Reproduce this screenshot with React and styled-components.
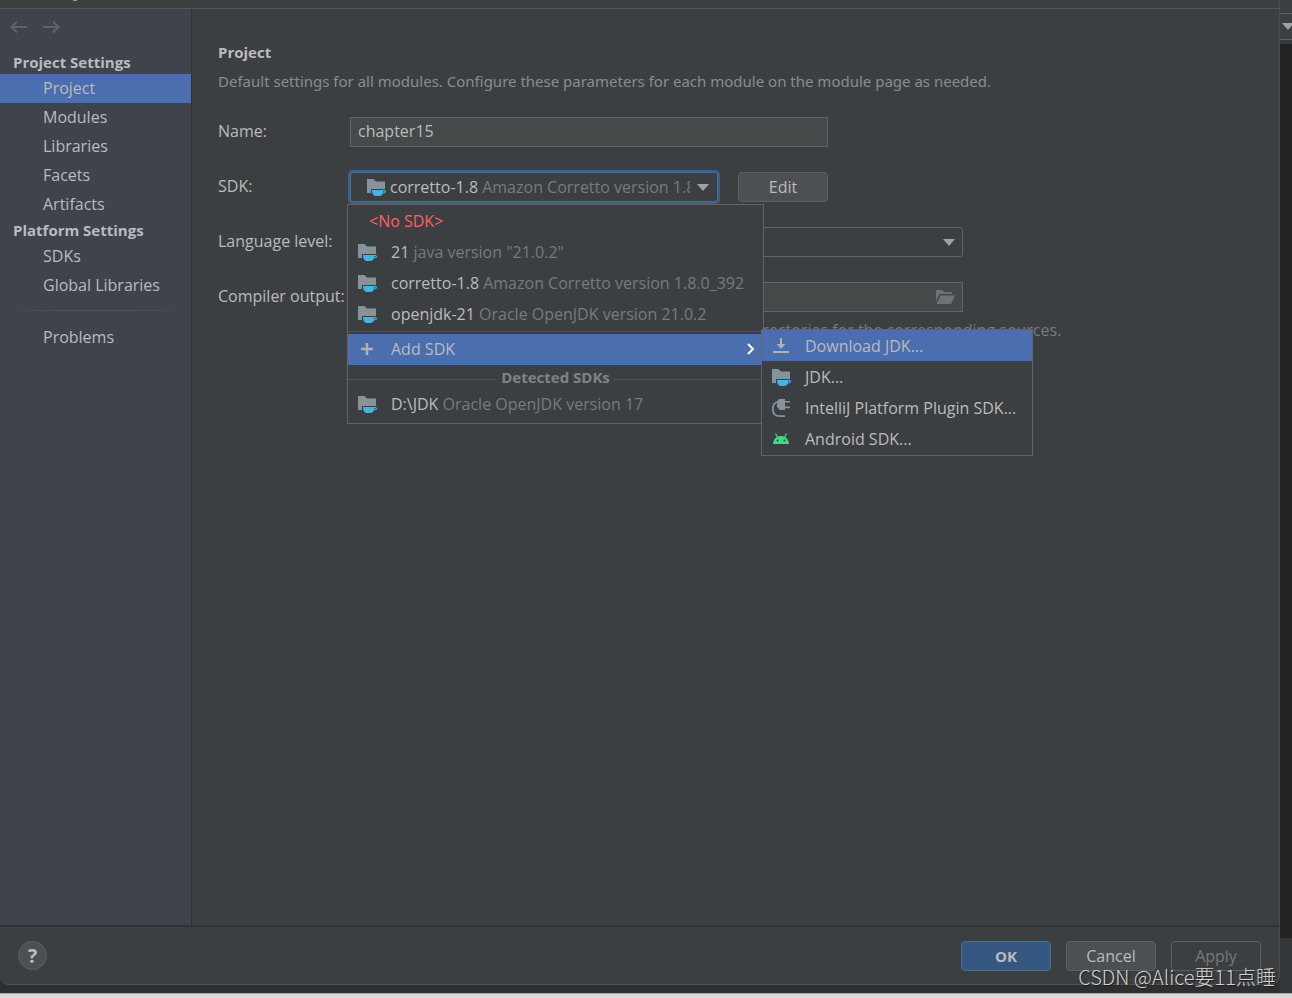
import React from "react";
import styled, { createGlobalStyle, css } from "styled-components";

const c = {
	bg: "#3c3f41",
	sidebar: "#3e434c",
	selection: "#4b6eaf",
	text: "#bbbbbb",
	muted: "#787a7b",
	border: "#646464",
	popupBorder: "#616365",
	divider: "#323232",
	field: "#45494a",
	icon: "#87939a",
	cup: "#40b6e0",
};

const GlobalStyle = createGlobalStyle`
	* {
		box-sizing: border-box;
	}
	body {
		margin: 0;
		background: #2d2f30;
		color: ${c.text};
		font: 16px/22px "Open Sans", "Noto Sans", "Noto Sans CJK SC", sans-serif;
	}
	button, input, select {
		font: inherit;
		color: inherit;
		margin: 0;
	}
`;

const Screen = styled.div`
	position: relative;
	display: flex;
	flex-direction: column;
	min-height: 100vh;
`;

const Desktop = styled.div`
	flex: 1;
	display: flex;
`;

const DesktopEdge = styled.div`
	height: 5px;
	background: #d9d9d9;
	border-top: 1px solid #a5a7a8;
`;

const Dialog = styled.div`
	flex: 1;
	min-width: 0;
	margin-bottom: 8px;
	display: flex;
	flex-direction: column;
	background: ${c.bg};
	border-right: 1px solid #4b4e50;
	border-bottom: 1px solid #505354;
	border-radius: 0 0 9px 9px;
`;

const TitleBar = styled.header`
	height: 9px;
	padding-left: 73px;
	border-bottom: 1px solid #555555;
`;

const TitleMark = styled.div`
	width: 4px;
	height: 1px;
	background: #a89a6c;
`;

const IdeStrip = styled.div`
	width: 12px;
	display: flex;
	flex-direction: column;
	background: #232323;
`;

const IdeToolbar = styled.div`
	height: 44px;
	padding-top: 13px;
	background: ${c.bg};
	border-bottom: 4px solid #37393b;
`;

const IdeCombo = styled.div`
	height: 27px;
	display: flex;
	align-items: center;
	overflow: hidden;
	padding-left: 2px;
	border-top: 1px solid #5e6060;
	border-bottom: 1px solid #5e6060;
	svg {
		flex: none;
	}
`;

const IdeStatus = styled.div`
	height: 55px;
	margin-top: auto;
	background: #333638;
`;

const Body = styled.div`
	flex: 1;
	display: flex;
`;

const Sidebar = styled.aside`
	width: 192px;
	flex: none;
	background: ${c.sidebar};
	border-right: 1px solid ${c.divider};
`;

const History = styled.div`
	display: flex;
	gap: 15px;
	height: 42px;
	padding: 9px 0 0 10px;
`;

const HistoryBtn = styled.button`
	all: unset;
	width: 18px;
	height: 18px;
	display: flex;
	color: #606366;
`;

const Group = styled.h2`
	margin: 0;
	padding-left: 13px;
	font-size: 15px;
	line-height: 23px;
`;

const NavItem = styled.a`
	display: block;
	padding-left: 43px;
	line-height: 29px;
	color: inherit;
	text-decoration: none;
	${({ $active }) =>
		$active &&
		css`
			background: ${c.selection};
		`}
`;

const NavDivider = styled.hr`
	height: 1px;
	margin: 10px 10px 12px;
	border: 0;
	background: linear-gradient(90deg, transparent, #515151 25%, #515151 75%, transparent);
`;

const Main = styled.main`
	flex: 1;
	min-width: 0;
	padding: 32px 26px;
`;

const Title = styled.h1`
	margin: 0;
	font-size: 15px;
	line-height: 22px;
`;

const Description = styled.p`
	margin: 7px 0 25px;
	font-family: "Noto Sans", sans-serif;
	font-size: 15px;
	color: #8a8c8d;
`;

const Form = styled.div`
	display: flex;
	flex-direction: column;
	gap: 25px;
`;

const Field = styled.div`
	display: grid;
	grid-template-columns: 132px minmax(0, ${({ $width }) => $width}px) auto;
	align-items: center;
	height: 30px;
`;

const Label = styled.label`
	padding-bottom: 2px;
`;

const Input = styled.input`
	width: 100%;
	height: 30px;
	padding: 0 7px 2px;
	background: ${c.field};
	border: 1px solid ${c.border};
	outline: 0;
`;

const FieldBox = styled.div`
	position: relative;
	height: 30px;
`;

const Adornment = styled.span`
	position: absolute;
	top: 0;
	right: 8px;
	height: 30px;
	display: flex;
	align-items: center;
	pointer-events: none;
`;

const Select = styled.select`
	appearance: none;
	width: 100%;
	height: 30px;
	padding: 0 30px 0 8px;
	background: ${c.bg};
	border: 1px solid ${c.border};
	border-radius: 3px;
`;

const Combo = styled.button`
	display: flex;
	align-items: center;
	width: 100%;
	height: 30px;
	padding: 0 8px 0 15px;
	background: ${c.bg};
	border: 1px solid #466d94;
	border-radius: 3px;
	box-shadow: 0 0 0 2px #3d6185;
	text-align: left;
`;

const ComboText = styled.span`
	flex: 1;
	overflow: hidden;
	white-space: nowrap;
	margin: 0 7px 0 4px;
`;

const Muted = styled.span`
	color: ${c.muted};
`;

const Button = styled.button`
	width: 90px;
	height: 30px;
	padding: 0;
	border: 1px solid #5e6060;
	border-radius: 4px;
	background: #4c5052;
	${({ $kind }) =>
		$kind === "primary" &&
		css`
			background: #365880;
			border-color: #4c708c;
			font-size: 15px;
			font-weight: 700;
		`}
	&:disabled {
		background: transparent;
		color: #777777;
	}
`;

const EditButton = styled(Button)`
	margin-left: 20px;
`;

const Hint = styled.p`
	margin: 7px 0 0 132px;
	white-space: nowrap;
	color: ${c.muted};
`;

const Menu = styled.div`
	position: absolute;
	z-index: ${({ $sub }) => ($sub ? 2 : 1)};
	background: ${c.bg};
	border: 1px solid ${c.popupBorder};
`;

const MenuItem = styled.button`
	display: flex;
	align-items: center;
	width: 100%;
	height: 31px;
	padding: 0 8px 2px ${({ $plain }) => ($plain ? 21 : 9)}px;
	border: 0;
	text-align: left;
	white-space: pre;
	background: ${({ $active }) => ($active ? c.selection : "transparent")};
	color: ${({ $plain }) => ($plain ? "#ff5f5f" : "inherit")};
`;

const SdkMenu = styled(Menu)`
	top: 32px;
	left: -3px;
	width: 417px;
	padding: 1px 0 3px;
`;

const SubMenu = styled(Menu)`
	top: -5px;
	left: 413px;
	width: 272px;
	padding-bottom: 1px;
	${MenuItem} {
		padding-bottom: 0;
	}
`;

const SubAnchor = styled.div`
	position: relative;
`;

const MenuIcon = styled.span`
	width: 34px;
	flex: none;
	display: flex;
`;

const Grow = styled.span`
	flex: 1;
`;

const Separator = styled.div`
	height: 4px;
	padding-top: 1px;
	&::after {
		content: "";
		display: block;
		height: 1px;
		background: #515151;
	}
`;

const Caption = styled.div`
	display: flex;
	align-items: center;
	gap: 4px;
	height: 24px;
	font-size: 15px;
	font-weight: 700;
	color: #808284;
	&::before,
	&::after {
		content: "";
		flex: 1;
		height: 1px;
		margin-top: 4px;
		background: #515151;
	}
`;

const Footer = styled.footer`
	display: flex;
	align-items: center;
	gap: 15px;
	height: 59px;
	padding: 0 18px;
	border-top: 2px solid ${c.divider};
`;

const HelpButton = styled.button`
	width: 29px;
	height: 29px;
	margin-right: auto;
	padding: 0;
	border: 1px solid #5e6060;
	border-radius: 50%;
	background: #4c5052;
	font-size: 20px;
	line-height: 27px;
	font-weight: 700;
`;

const Watermark = styled.div`
	position: absolute;
	right: 16px;
	bottom: 8px;
	z-index: 3;
	font: 20px/26px "Noto Sans CJK SC", sans-serif;
	font-weight: 300;
	color: #d2d2d2;
	text-shadow: 1px 1px 1px #1c1c1c;
`;

const JdkIcon = () => (
	<svg width="20" height="20" viewBox="0 0 20 20">
		<path fill={c.icon} d="M1 2h6.500l2.500 2.500h9V12H5v4H1z" />
		<path
			fill={c.cup}
			fillRule="evenodd"
			d="M6 13h12c1.200 0 2 .6 2 1.500 0 1.300-1.400 2-3.200 2-.6 1.500-1.600 2.500-3 2.500H10C7.500 19 6 16.500 6 13zm11.300 1.100-.2 1.400c1 0 1.700-.3 1.700-.8 0-.4-.4-.6-1-.6z"
		/>
	</svg>
);

const PlusIcon = () => (
	<svg width="20" height="20" viewBox="0 0 20 20">
		<path stroke="#afb1b3" strokeWidth="2.500" d="M10 4v12M4 10h12" />
	</svg>
);

const DownloadIcon = () => (
	<svg width="20" height="20" viewBox="0 0 20 20">
		<path fill="#afb1b3" d="M9 2h2v6h3.500L10 13 5.500 8H9zM2 15h16v2H2z" />
	</svg>
);

const PlugIcon = () => (
	<svg width="20" height="20" viewBox="0 0 20 20">
		<path fill={c.icon} d="M6 3.500L8 1h6v2h5v1.600h-5v4h5v1.600h-5V12H9L6 9z" />
		<path fill="none" stroke={c.icon} strokeWidth="1.800" d="M7 3.500C3.500 4.500 1.800 7.500 1.800 11c0 4.500 2.700 7.200 7 7.200H14" />
	</svg>
);

const AndroidIcon = () => (
	<svg width="20" height="20" viewBox="0 0 20 20">
		<path stroke="#3ddc84" strokeWidth="1.200" d="M4.500 4.500l2 4M15.500 4.500l-2 4" />
		<path
			fill="#3ddc84"
			fillRule="evenodd"
			d="M2 15C2.300 10.500 5.500 7 10 7s7.700 3.500 8 8zM6.500 10.500a1 1 0 1 0 0 2 1 1 0 0 0 0-2zm7 0a1 1 0 1 0 0 2 1 1 0 0 0 0-2z"
		/>
	</svg>
);

const OpenFolderIcon = () => (
	<svg width="20" height="16" viewBox="0 0 20 16">
		<path fill="#6c7275" d="M1 1h6l2 2h8v2H4.500L1 12z" />
		<path fill="#6c7275" d="M5.500 6.500H20L16 15H1.500z" />
	</svg>
);

const Caret = () => (
	<svg width="12" height="7" viewBox="0 0 12 7">
		<path fill="#9fa2a5" d="M0 0h12L6 7z" />
	</svg>
);

const Chevron = () => (
	<svg width="8" height="12" viewBox="0 0 8 12">
		<path fill="none" stroke="#ffffff" strokeWidth="2" d="M1 1l5 5-5 5" />
	</svg>
);

const Arrow = ({ flip }) => (
	<svg width="18" height="18" viewBox="0 0 18 18">
		<path
			fill="none"
			stroke="currentColor"
			strokeWidth="2"
			d={flip ? "M0 9h15M10 3.500L15.500 9 10 14.500" : "M17 9H2M7 3.500L1.500 9 7 14.500"}
		/>
	</svg>
);

const projectSettings = ["Project", "Modules", "Libraries", "Facets", "Artifacts"];
const platformSettings = ["SDKs", "Global Libraries"];

const sdks = [
	{ name: "21", version: 'java version "21.0.2"' },
	{ name: "corretto-1.8", version: "Amazon Corretto version 1.8.0_392" },
	{ name: "openjdk-21", version: "Oracle OpenJDK version 21.0.2" },
];

const addActions = [
	{ label: "Download JDK...", icon: <DownloadIcon />, active: true },
	{ label: "JDK...", icon: <JdkIcon /> },
	{ label: "IntelliJ Platform Plugin SDK...", icon: <PlugIcon /> },
	{ label: "Android SDK...", icon: <AndroidIcon /> },
];

function SdkRow({ name, version }) {
	return (
		<MenuItem role="menuitem">
			<MenuIcon>
				<JdkIcon />
			</MenuIcon>
			{name} <Muted>{version}</Muted>
		</MenuItem>
	);
}

function SdkPopup() {
	return (
		<SdkMenu role="menu">
			<MenuItem role="menuitem" $plain>
				{"<No SDK>"}
			</MenuItem>
			{sdks.map((s) => (
				<SdkRow key={s.name} {...s} />
			))}
			<Separator />
			<SubAnchor>
				<MenuItem role="menuitem" aria-haspopup="menu" $active>
					<MenuIcon>
						<PlusIcon />
					</MenuIcon>
					Add SDK
					<Grow />
					<Chevron />
				</MenuItem>
				<SubMenu role="menu" $sub>
					{addActions.map((a) => (
						<MenuItem key={a.label} role="menuitem" $active={a.active}>
							<MenuIcon>{a.icon}</MenuIcon>
							{a.label}
						</MenuItem>
					))}
				</SubMenu>
			</SubAnchor>
			<Caption>Detected SDKs</Caption>
			<SdkRow name="D:\JDK" version="Oracle OpenJDK version 17" />
		</SdkMenu>
	);
}

function SettingsNav() {
	return (
		<Sidebar>
			<History>
				<HistoryBtn aria-label="Back">
					<Arrow />
				</HistoryBtn>
				<HistoryBtn aria-label="Forward">
					<Arrow flip />
				</HistoryBtn>
			</History>
			<nav>
				<Group>Project Settings</Group>
				{projectSettings.map((n) => (
					<NavItem key={n} href="#" $active={n === "Project"}>
						{n}
					</NavItem>
				))}
				<Group>Platform Settings</Group>
				{platformSettings.map((n) => (
					<NavItem key={n} href="#">
						{n}
					</NavItem>
				))}
				<NavDivider />
				<NavItem href="#">Problems</NavItem>
			</nav>
		</Sidebar>
	);
}

function ProjectPage() {
	return (
		<Main>
			<Title>Project</Title>
			<Description>
				Default settings for all modules. Configure these parameters for each module on the module page as needed.
			</Description>
			<Form>
				<Field $width={478}>
					<Label htmlFor="name">Name:</Label>
					<Input id="name" defaultValue="chapter15" />
				</Field>
				<Field $width={368}>
					<Label htmlFor="sdk">SDK:</Label>
					<FieldBox>
						<Combo id="sdk" aria-haspopup="menu" aria-expanded="true">
							<JdkIcon />
							<ComboText>
								corretto-1.8 <Muted>Amazon Corretto version 1.8.0_392</Muted>
							</ComboText>
							<Caret />
						</Combo>
						<SdkPopup />
					</FieldBox>
					<EditButton>Edit</EditButton>
				</Field>
				<Field $width={613}>
					<Label htmlFor="level">Language level:</Label>
					<FieldBox>
						<Select id="level">
							<option>SDK default</option>
						</Select>
						<Adornment>
							<Caret />
						</Adornment>
					</FieldBox>
				</Field>
				<Field $width={613}>
					<Label htmlFor="output">Compiler output:</Label>
					<FieldBox>
						<Input id="output" />
						<Adornment>
							<OpenFolderIcon />
						</Adornment>
					</FieldBox>
				</Field>
			</Form>
			<Hint>
				Used for module subdirectories, Production and Test directories for the corresponding sources.
			</Hint>
		</Main>
	);
}

export default function App() {
	return (
		<>
			<GlobalStyle />
			<Screen>
				<Desktop>
					<Dialog>
						<TitleBar>
							<TitleMark />
						</TitleBar>
						<Body>
							<SettingsNav />
							<ProjectPage />
						</Body>
						<Footer>
							<HelpButton aria-label="Help">?</HelpButton>
							<Button $kind="primary">OK</Button>
							<Button>Cancel</Button>
							<Button disabled>Apply</Button>
						</Footer>
					</Dialog>
					<IdeStrip>
						<IdeToolbar>
							<IdeCombo>
								<Caret />
							</IdeCombo>
						</IdeToolbar>
						<IdeStatus />
					</IdeStrip>
				</Desktop>
				<DesktopEdge />
				<Watermark>CSDN @Alice要11点睡</Watermark>
			</Screen>
		</>
	);
}
